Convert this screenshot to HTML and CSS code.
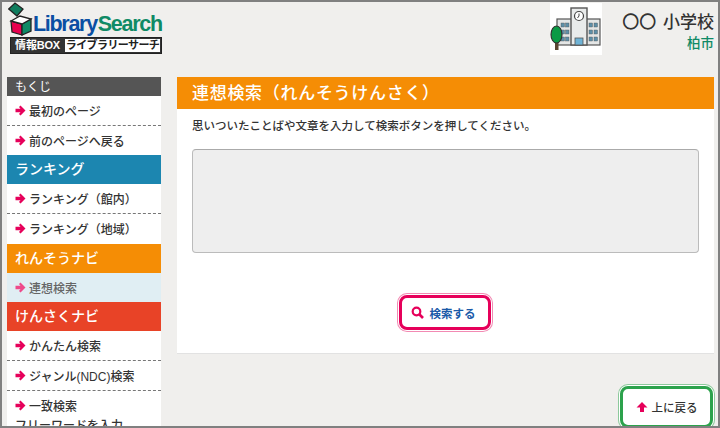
FILE: index.html
```html
<!DOCTYPE html>
<html lang="ja">
<head>
    <meta charset="UTF-8">
    <title>連想検索</title>
    <link rel="stylesheet" href="styles.css">
</head>
<body>
    <svg class="defs" width="0" height="0">
        <symbol id="arrow" viewBox="0 0 11 11">
            <path d="M5.5 0.5 L10.5 5.5 L5.5 10.5 L4 9 L5.5 7.2 H0.5 V3.8 H5.5 L4 2 Z" fill="currentColor"/>
        </symbol>
    </svg>
    <div class="frame">
        <header class="top">
            <div class="logo">
                <div class="logo-main">
                    <svg class="logo-box" width="25" height="34" viewBox="0 0 25 34">
                        <path d="M0.7 7 L7 1 L15 7 L9 14 Z" fill="#0f7d5e" stroke="#222" stroke-width="1.3"/>
                        <path d="M3 19 L14 22 L14 33 L4 30 Z" fill="#e6004f" stroke="#222" stroke-width="1.3"/>
                        <path d="M14 22 L23 17 L23 29 L14 33 Z" fill="#0f8a66" stroke="#222" stroke-width="1.3"/>
                        <path d="M3 19 L12 14 L23 17 L14 22 Z" fill="#fff" stroke="#222" stroke-width="1.3"/>
                    </svg>
                    <span class="logo-text"><span class="logo-blue">Library</span><span class="logo-green">Search</span></span>
                </div>
                <div class="logo-sub">
                    <span class="logo-sub-dark">情報BOX</span>
                    <span class="logo-sub-light">ライブラリーサーチ</span>
                </div>
            </div>
            <div class="school">
                <svg class="school-pic" width="52" height="52" viewBox="0 0 52 52">
                    <rect width="52" height="52" fill="#fff"/>
                    <rect x="7" y="16" width="43" height="26" fill="#e4e6e6" stroke="#555" stroke-width="1.2"/>
                    <rect x="21" y="5" width="16" height="37" fill="#e9ebeb" stroke="#555" stroke-width="1.4"/>
                    <circle cx="29" cy="13" r="4.5" fill="#fff" stroke="#444" stroke-width="1.2"/>
                    <path d="M29 10.5 V13 L27.5 15" fill="none" stroke="#444"/>
                    <rect x="25" y="35" width="8" height="7" fill="#6fb3d6" stroke="#555" stroke-width="0.8"/>
                    <g fill="#5d8fa8" stroke="#555" stroke-width="0.4">
                        <rect x="11" y="20" width="3.5" height="4"/><rect x="15.5" y="20" width="3.5" height="4"/>
                        <rect x="11" y="27" width="3.5" height="4"/><rect x="15.5" y="27" width="3.5" height="4"/>
                        <rect x="11" y="34" width="3.5" height="4"/><rect x="15.5" y="34" width="3.5" height="4"/>
                        <rect x="39" y="20" width="3.5" height="4"/><rect x="44" y="20" width="3.5" height="4"/>
                        <rect x="39" y="27" width="3.5" height="4"/><rect x="44" y="27" width="3.5" height="4"/>
                        <rect x="39" y="34" width="3.5" height="4"/><rect x="44" y="34" width="3.5" height="4"/>
                    </g>
                    <rect x="5" y="36" width="3.5" height="11" fill="#5a4632"/>
                    <ellipse cx="6.5" cy="31.5" rx="5.5" ry="8.5" fill="#0a9a45" stroke="#333" stroke-width="1.2"/>
                </svg>
                <div class="school-name">
                    <div class="school-title">〇〇 小学校</div>
                    <div class="school-city">柏市</div>
                </div>
            </div>
        </header>

        <div class="columns">
            <nav class="side">
                <div class="side-head">もくじ</div>
                <a class="side-link dashed"><svg class="arrow"><use href="#arrow"/></svg>最初のページ</a>
                <a class="side-link short"><svg class="arrow"><use href="#arrow"/></svg>前のページへ戻る</a>
                <div class="side-title blue">ランキング</div>
                <a class="side-link dashed"><svg class="arrow"><use href="#arrow"/></svg>ランキング（館内）</a>
                <a class="side-link"><svg class="arrow"><use href="#arrow"/></svg>ランキング（地域）</a>
                <div class="side-title orange">れんそうナビ</div>
                <a class="side-link current"><svg class="arrow"><use href="#arrow"/></svg>連想検索</a>
                <div class="side-title red">けんさくナビ</div>
                <a class="side-link dashed"><svg class="arrow"><use href="#arrow"/></svg>かんたん検索</a>
                <a class="side-link dashed"><svg class="arrow"><use href="#arrow"/></svg>ジャンル(NDC)検索</a>
                <a class="side-link short"><svg class="arrow"><use href="#arrow"/></svg>一致検索</a>
                <div class="side-note">フリーワードを入力</div>
            </nav>

            <main class="content">
                <section class="panel">
                    <h1>連想検索（れんそうけんさく）</h1>
                    <p>思いついたことばや文章を入力して検索ボタンを押してください。</p>
                    <textarea class="search-box"></textarea>
                    <div class="search-row">
                        <button class="search-btn">
                            <svg width="13" height="13" viewBox="0 0 13 13">
                                <circle cx="5.5" cy="5.5" r="3.8" fill="none" stroke="#e6005a" stroke-width="2.2"/>
                                <path d="M8.5 8.5 L12 12" stroke="#e6005a" stroke-width="2.6"/>
                            </svg>
                            検索する
                        </button>
                    </div>
                </section>
                <div class="up-row">
                    <button class="up-btn">
                        <svg width="12" height="12" viewBox="0 0 12 12">
                            <path d="M6 1 L11.5 6.5 H8 V11 H4 V6.5 H0.5 Z" fill="#e6005a"/>
                        </svg>
                        上に戻る
                    </button>
                </div>
            </main>
        </div>
    </div>
</body>
</html>
```

FILE: styles.css
```css
* {
    box-sizing: border-box;
}

html, body {
    margin: 0;
    padding: 0;
    height: 100%;
    overflow: hidden;
}

body {
    font-family: "Liberation Sans", "Noto Sans CJK JP", sans-serif;
    color: #333;
}

.defs {
    display: block;
    height: 0;
}

.frame {
    width: 720px;
    height: 428px;
    overflow: hidden;
    background: #f0efed;
    border: 2px solid #808080;
}

.top {
    height: 75px;
    display: flex;
    justify-content: space-between;
    padding: 1px 2px 0 5px;
}

.logo {
    width: 160px;
}

.logo-main {
    display: flex;
    align-items: flex-end;
    height: 33px;
}

.logo-box {
    flex: none;
    margin-left: 1px;
}

.logo-text {
    font-weight: bold;
    font-size: 21.5px;
    line-height: 24px;
    letter-spacing: -1.3px;
    white-space: nowrap;
}

.logo-blue {
    color: #0a4fa3;
}

.logo-green {
    color: #0f8a66;
    margin-left: 1px;
}

.logo-sub {
    display: flex;
    width: 152px;
    height: 17px;
    margin: 1px 0 0 3px;
    background: #333;
    border: 1px solid #222;
    font-size: 11px;
    line-height: 15px;
    font-weight: bold;
}

.logo-sub-dark {
    width: 53px;
    text-align: center;
    color: #fff;
    letter-spacing: -0.2px;
    white-space: nowrap;
}

.logo-sub-light {
    flex: 1;
    margin: 1px;
    line-height: 13px;
    background: #fff;
    color: #222;
    text-align: center;
    white-space: nowrap;
    letter-spacing: -0.6px;
}

.school {
    display: flex;
}

.school-pic {
    flex: none;
    margin: 0 20px 0 0;
}

.school-name {
    text-align: right;
    padding: 8px 2px 0 0;
}

.school-title {
    font-size: 17px;
    line-height: 24px;
    color: #333;
    font-weight: 500;
    word-spacing: 2px;
    white-space: nowrap;
}

.school-city {
    font-size: 13.5px;
    line-height: 18px;
    color: #0f8a66;
    font-weight: 500;
}

.columns {
    display: flex;
    padding-left: 5px;
}

.side {
    width: 154px;
    flex: none;
    background: #fff;
    font-size: 12px;
    font-weight: 500;
}

.side-head {
    height: 19px;
    line-height: 20px;
    background: #555;
    color: #fff;
    padding-left: 8px;
    font-weight: 400;
}

.side-link {
    display: flex;
    align-items: center;
    height: 30px;
    padding: 0 0 1px 8px;
    color: #333;
}

.short {
    height: 29px;
}

.dashed {
    border-bottom: 1px dashed #777;
}

.arrow {
    color: #e6005a;
    width: 11px;
    height: 11px;
    margin-right: 3px;
    flex: none;
}

.current {
    background: #e0eef3;
    color: #666;
    height: 29px;
}

.current .arrow {
    color: #ee4a8a;
}

.side-title {
    height: 29px;
    line-height: 28px;
    padding-left: 8px;
    color: #fff;
    font-size: 14px;
}

.blue {
    background: #1c86b0;
}

.orange {
    background: #f58d05;
}

.red {
    background: #e84327;
}

.side-note {
    padding-left: 8px;
    line-height: 16px;
    margin-top: -2px;
    color: #333;
}

.content {
    width: 537px;
    margin-left: 16px;
}

.panel {
    height: 277px;
    background: #fff;
    border-bottom: 1px solid #e2e2e2;
}

.panel h1 {
    margin: 0;
    height: 32px;
    padding-left: 15px;
    background: #f58d05;
    color: #fff;
    font-size: 17px;
    line-height: 33px;
    font-weight: 500;
    letter-spacing: 0.7px;
}

.panel p {
    margin: 0;
    padding: 9px 0 0 15px;
    font-size: 11.5px;
    line-height: 17px;
    font-weight: 500;
}

.search-box {
    display: block;
    width: 507px;
    height: 104px;
    margin: 14px 0 0 15px;
    background: #eee;
    border: 1px solid #bbb;
    border-top-color: #aaa;
    border-radius: 4px;
    resize: none;
}

.search-row {
    display: flex;
    justify-content: center;
    padding: 41px 1px 0 0;
}

.search-btn,
.up-btn {
    display: flex;
    align-items: center;
    justify-content: center;
    background: #fff;
    font-family: inherit;
    font-size: 11.5px;
    font-weight: bold;
    padding: 0;
    border-radius: 8px;
}

.search-btn {
    width: 92px;
    height: 35px;
    margin-top: 1px;
    gap: 6px;
    padding-right: 4px;
    color: #1a5aa8;
    border: 3px solid #e6005a;
    box-shadow: 0 0 0 1px #fff, 0 0 0 2px #f28ab3;
}

.up-row {
    display: flex;
    justify-content: flex-end;
    padding-top: 32px;
}

.up-btn {
    width: 93px;
    height: 42px;
    margin-right: 1px;
    gap: 4px;
    color: #333;
    font-weight: 500;
    border: 3px solid #2ca24c;
    box-shadow: 0 0 0 1px #fff, 0 0 0 2px #8cc99c;
}
```
